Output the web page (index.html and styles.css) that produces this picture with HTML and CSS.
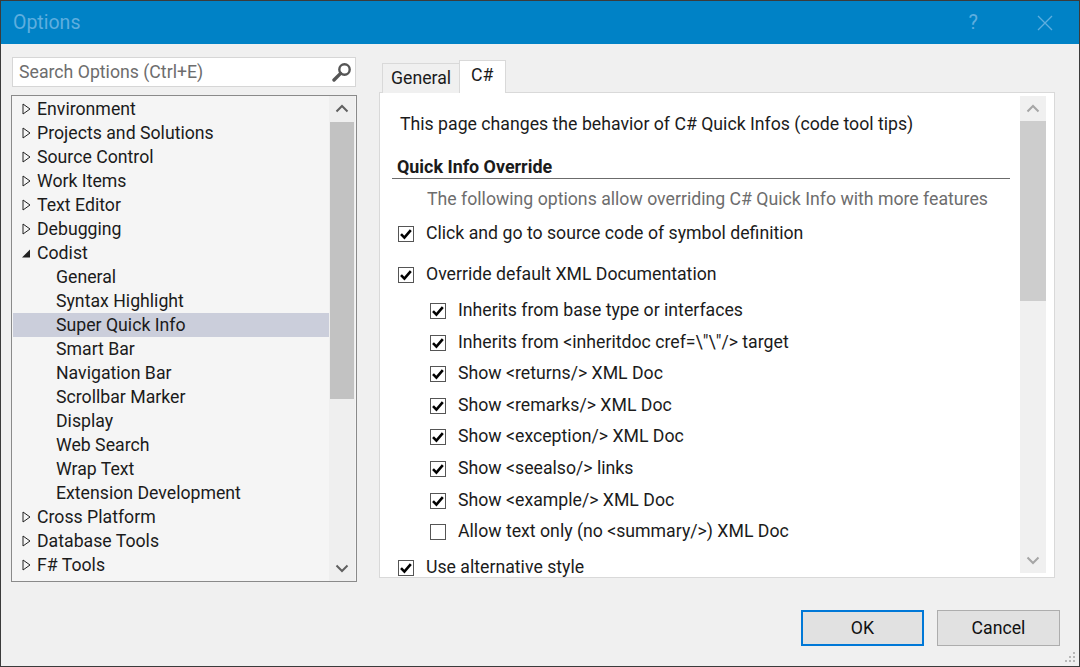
FILE: index.html
```html
<!DOCTYPE html>
<html>
<head>
<meta charset="utf-8">
<link rel="stylesheet" href="styles.css">
</head>
<body>
<div class="window">
  <div class="titlebar">
    <span class="title">Options</span>
    <span class="help">?</span>
    <svg class="close" width="16" height="16" viewBox="0 0 16 16"><path d="M1 1L15 15M15 1L1 15" stroke="#5eaedf" stroke-width="1.3" fill="none"/></svg>
  </div>
  <div class="main">
    <div class="left">
      <div class="search">
        <span class="placeholder">Search Options (Ctrl+E)</span>
        <svg class="mag" width="22" height="20" viewBox="0 0 22 20"><circle cx="13.5" cy="7.5" r="5.2" stroke="#555" stroke-width="2.4" fill="none"/><path d="M9.6 11.4L3 18" stroke="#555" stroke-width="3.4" stroke-linecap="round"/></svg>
      </div>
      <div class="tree">
        <div class="tree-list">
          <div class="node"><svg class="exp" width="9" height="12" viewBox="0 0 9 12"><path d="M1 1L8 6L1 11Z" fill="none" stroke="#222" stroke-width="1"/></svg>Environment</div>
          <div class="node"><svg class="exp" width="9" height="12" viewBox="0 0 9 12"><path d="M1 1L8 6L1 11Z" fill="none" stroke="#222" stroke-width="1"/></svg>Projects and Solutions</div>
          <div class="node"><svg class="exp" width="9" height="12" viewBox="0 0 9 12"><path d="M1 1L8 6L1 11Z" fill="none" stroke="#222" stroke-width="1"/></svg>Source Control</div>
          <div class="node"><svg class="exp" width="9" height="12" viewBox="0 0 9 12"><path d="M1 1L8 6L1 11Z" fill="none" stroke="#222" stroke-width="1"/></svg>Work Items</div>
          <div class="node"><svg class="exp" width="9" height="12" viewBox="0 0 9 12"><path d="M1 1L8 6L1 11Z" fill="none" stroke="#222" stroke-width="1"/></svg>Text Editor</div>
          <div class="node"><svg class="exp" width="9" height="12" viewBox="0 0 9 12"><path d="M1 1L8 6L1 11Z" fill="none" stroke="#222" stroke-width="1"/></svg>Debugging</div>
          <div class="node"><svg class="exp" width="9" height="12" viewBox="0 0 9 12"><path d="M0 10.5L8 10.5L8 2.5Z" fill="#222"/></svg>Codist</div>
          <div class="node child">General</div>
          <div class="node child">Syntax Highlight</div>
          <div class="node child selected">Super Quick Info</div>
          <div class="node child">Smart Bar</div>
          <div class="node child">Navigation Bar</div>
          <div class="node child">Scrollbar Marker</div>
          <div class="node child">Display</div>
          <div class="node child">Web Search</div>
          <div class="node child">Wrap Text</div>
          <div class="node child">Extension Development</div>
          <div class="node"><svg class="exp" width="9" height="12" viewBox="0 0 9 12"><path d="M1 1L8 6L1 11Z" fill="none" stroke="#222" stroke-width="1"/></svg>Cross Platform</div>
          <div class="node"><svg class="exp" width="9" height="12" viewBox="0 0 9 12"><path d="M1 1L8 6L1 11Z" fill="none" stroke="#222" stroke-width="1"/></svg>Database Tools</div>
          <div class="node"><svg class="exp" width="9" height="12" viewBox="0 0 9 12"><path d="M1 1L8 6L1 11Z" fill="none" stroke="#222" stroke-width="1"/></svg>F# Tools</div>
        </div>
        <div class="vscroll tree-scroll">
          <div class="arrow"><svg width="14" height="9" viewBox="0 0 14 9"><path d="M1.5 7.5L7 2L12.5 7.5" stroke="#606060" stroke-width="2" fill="none"/></svg></div>
          <div class="thumb tree-thumb"></div>
          <div class="track"></div>
          <div class="arrow"><svg width="14" height="9" viewBox="0 0 14 9"><path d="M1.5 1.5L7 7L12.5 1.5" stroke="#606060" stroke-width="2" fill="none"/></svg></div>
        </div>
      </div>
    </div>
    <div class="right">
      <div class="tabs">
        <div class="tab">General</div>
        <div class="tab active">C#</div>
      </div>
      <div class="panel">
        <div class="content">
          <div class="intro">This page changes the behavior of C# Quick Infos (code tool tips)</div>
          <div class="heading">Quick Info Override</div>
          <div class="note">The following options allow overriding C# Quick Info with more features</div>
          <div class="cb lvl1 first"><span class="box checked"></span>Click and go to source code of symbol definition</div>
          <div class="cb lvl1 second"><span class="box checked"></span>Override default XML Documentation</div>
          <div class="subgroup">
            <div class="cb lvl2"><span class="box checked"></span>Inherits from base type or interfaces</div>
            <div class="cb lvl2"><span class="box checked"></span>Inherits from &lt;inheritdoc cref=\"\"/&gt; target</div>
            <div class="cb lvl2"><span class="box checked"></span>Show &lt;returns/&gt; XML Doc</div>
            <div class="cb lvl2"><span class="box checked"></span>Show &lt;remarks/&gt; XML Doc</div>
            <div class="cb lvl2"><span class="box checked"></span>Show &lt;exception/&gt; XML Doc</div>
            <div class="cb lvl2"><span class="box checked"></span>Show &lt;seealso/&gt; links</div>
            <div class="cb lvl2"><span class="box checked"></span>Show &lt;example/&gt; XML Doc</div>
            <div class="cb lvl2"><span class="box"></span>Allow text only (no &lt;summary/&gt;) XML Doc</div>
          </div>
          <div class="cb lvl1 alt"><span class="box checked"></span>Use alternative style</div>
        </div>
        <div class="vscroll panel-scroll">
          <div class="arrow"><svg width="14" height="9" viewBox="0 0 14 9"><path d="M1.5 7.5L7 2L12.5 7.5" stroke="#a6a6a6" stroke-width="2" fill="none"/></svg></div>
          <div class="thumb panel-thumb"></div>
          <div class="track"></div>
          <div class="arrow"><svg width="14" height="9" viewBox="0 0 14 9"><path d="M1.5 1.5L7 7L12.5 1.5" stroke="#a6a6a6" stroke-width="2" fill="none"/></svg></div>
        </div>
      </div>
    </div>
  </div>
  <div class="footer">
    <button class="btn default">OK</button>
    <button class="btn">Cancel</button>
  </div>
  <svg class="grip" width="12" height="12" viewBox="0 0 12 12">
    <rect x="8" y="0" width="2" height="2" fill="#b8b8b8"/>
    <rect x="4" y="4" width="2" height="2" fill="#b8b8b8"/>
    <rect x="8" y="4" width="2" height="2" fill="#b8b8b8"/>
    <rect x="0" y="8" width="2" height="2" fill="#b8b8b8"/>
    <rect x="4" y="8" width="2" height="2" fill="#b8b8b8"/>
    <rect x="8" y="8" width="2" height="2" fill="#b8b8b8"/>
  </svg>
</div>
</body>
</html>
```

FILE: styles.css
```css
* { box-sizing: border-box; }
html, body { margin: 0; padding: 0; }
body {
  width: 1080px;
  height: 667px;
  overflow: hidden;
  font-family: Roboto, "Liberation Sans", sans-serif;
  color: #1b1b1b;
}
.window {
  position: relative;
  width: 1080px;
  height: 667px;
  background: #f0f0f0;
  border: 1px solid #3b3b3b;
  display: flex;
  flex-direction: column;
}
.titlebar {
  height: 43px;
  background: #0082c6;
  display: flex;
  align-items: center;
  flex-shrink: 0;
}
.title {
  margin-left: 12px;
  font-size: 19.5px;
  color: #5eaedf;
  margin-top: -1px;
}
.help {
  margin-left: auto;
  font-size: 20px;
  color: #5eaedf;
  margin-right: 59px;
  margin-top: -2px;
}
.close { margin-right: 26px; }

.main {
  display: flex;
  align-items: flex-start;
  height: 555px;
  flex-shrink: 0;
}
.left {
  margin-left: 10px;
  margin-top: 13px;
  width: 346px;
  display: flex;
  flex-direction: column;
}
.search {
  margin: 0 1px;
  height: 30px;
  background: #fff;
  border: 1px solid #d6d6d6;
  display: flex;
  align-items: center;
  padding-left: 6px;
}
.placeholder {
  font-size: 17.7px;
  color: #6d6d6d;
  flex: 1;
}
.mag { margin-right: 2px; }
.tree {
  margin-top: 8px;
  height: 487px;
  border: 1px solid #8a8a8a;
  background: #f5f5f5;
  display: flex;
}
.tree-list {
  flex: 1;
  padding: 1px 0 0 1px;
  overflow: hidden;
}
.node {
  height: 24px;
  line-height: 24px;
  font-size: 17.7px;
  display: flex;
  align-items: center;
  padding-left: 9px;
  white-space: nowrap;
}
.exp { margin-right: 6px; flex-shrink: 0; }
.node.child { padding-left: 43px; }
.node.selected { background: #cbcedb; }

.vscroll {
  display: flex;
  flex-direction: column;
  flex-shrink: 0;
}
.vscroll .arrow {
  height: 25px;
  display: flex;
  align-items: center;
  justify-content: center;
}
.tree-scroll {
  width: 26px;
  background: #efefef;
  margin-right: 1px;
}
.thumb { background: #c2c2c2; }
.tree-thumb { height: 277px; margin: 1px 1px 0; }
.track { flex: 1; }

.right {
  margin-left: 22px;
  margin-top: 16px;
  width: 676px;
  display: flex;
  flex-direction: column;
}
.tabs {
  display: flex;
  align-items: flex-end;
  height: 33px;
  padding-left: 3px;
  position: relative;
  z-index: 1;
  margin-bottom: -1px;
}
.tab {
  height: 30px;
  border: 1px solid #d9d9d9;
  border-bottom: none;
  background: #f0f0f0;
  font-size: 17.7px;
  padding: 0 8px 0 8px;
  line-height: 29px;
  width: 78px;
}
.tab.active {
  height: 33px;
  width: 47px;
  background: #fff;
  margin-left: -1px;
  padding-left: 11px;
  line-height: 29px;
}
.panel {
  height: 486px;
  border: 1px solid #d9d9d9;
  background: #fff;
  display: flex;
  overflow: hidden;
}
.content {
  flex: 1;
  overflow: hidden;
  padding-top: 19px;
  padding-left: 12px;
  font-size: 17.7px;
}
.intro {
  height: 24px;
  line-height: 24px;
  padding-left: 8px;
}
.heading {
  margin-top: 20px;
  height: 23px;
  line-height: 22px;
  font-weight: bold;
  font-size: 17.9px;
  padding-left: 5px;
  border-bottom: 1px solid #6b6b6b;
  width: 618px;
}
.note {
  margin-top: 8px;
  height: 24px;
  line-height: 24px;
  padding-left: 35px;
  color: #6d6d6d;
}
.cb {
  display: flex;
  align-items: center;
  height: 24px;
  white-space: nowrap;
}
.cb.lvl1 { padding-left: 6px; }
.cb.first { margin-top: 10px; }
.cb.second { margin-top: 17px; }
.subgroup { margin-top: 12px; }
.cb.lvl2 { padding-left: 38px; height: 31.6px; }
.cb.lvl2:first-child { height: 24px; margin-bottom: 3.8px; }
.cb.alt { margin-top: 8px; }
.box {
  width: 16px;
  height: 16px;
  border: 1px solid #555;
  background: #fff;
  margin-right: 12px;
  flex-shrink: 0;
  margin-top: 2px;
}
.box.checked {
  background: #fff url("data:image/svg+xml;utf8,<svg xmlns='http://www.w3.org/2000/svg' width='14' height='14' viewBox='0 0 14 14'><path d='M2 7.2L5.4 10.6L11.8 3.2' stroke='black' stroke-width='2.6' fill='none'/></svg>") center/14px 14px no-repeat;
}
.panel-scroll {
  width: 26px;
  margin: 3px 8px 4px 0;
  background: #f0f0f0;
}
.panel-thumb { height: 180px; background: #cdcdcd; }

.footer {
  display: flex;
  justify-content: flex-end;
  gap: 13px;
  padding-right: 19px;
  padding-top: 11px;
}
.btn {
  width: 123px;
  height: 36px;
  background: #e1e1e1;
  border: 1px solid #adadad;
  font-family: Roboto, "Liberation Sans", sans-serif;
  font-size: 17.7px;
  color: #111;
  padding: 0;
}
.btn.default { border: 2px solid #0078d7; }
.grip {
  position: absolute;
  right: 2px;
  bottom: 2px;
}
```
